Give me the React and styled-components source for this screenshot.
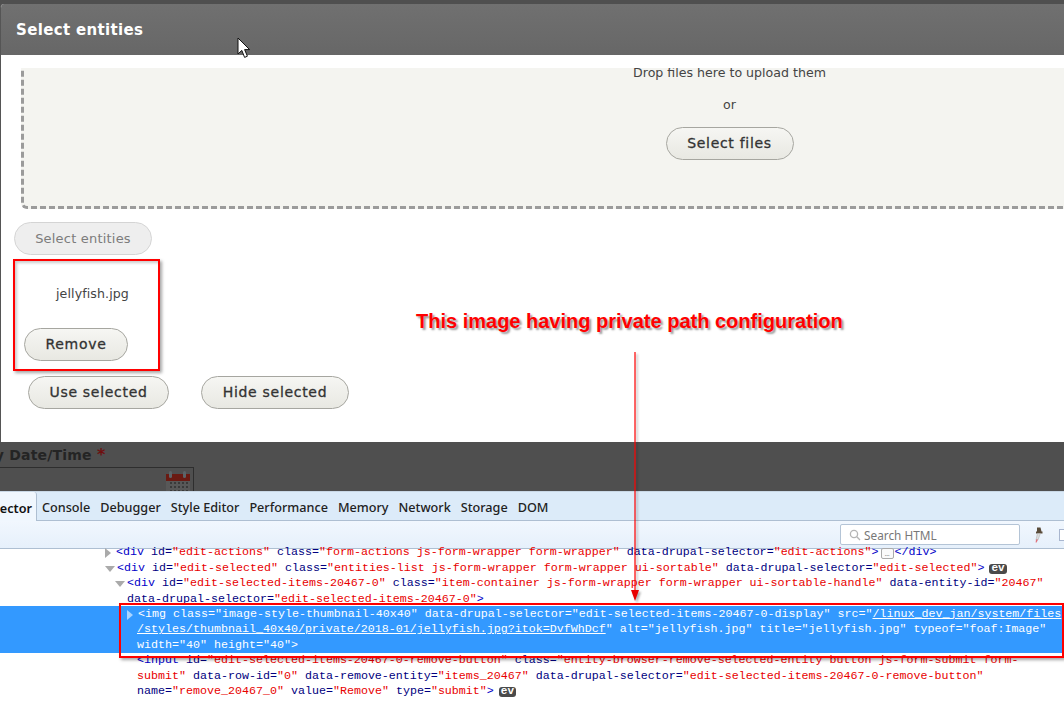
import styled, { createGlobalStyle } from "styled-components";

const GlobalStyle = createGlobalStyle`
    html, body {
        margin: 0;
        padding: 0;
        background: #4f4f4f;
    }
    * {
        box-sizing: border-box;
    }
`;

const tabs = [
    "Console",
    "Debugger",
    "Style Editor",
    "Performance",
    "Memory",
    "Network",
    "Storage",
    "DOM",
];

function Attr({ name, value }) {
    return (
        <>
            <AttrName>{name}=</AttrName>
            <AttrValue>"{value}"</AttrValue>
        </>
    );
}

export default function App() {
    return (
        <Page>
            <GlobalStyle />
            <Dialog>
                <TitleBar>Select entities</TitleBar>
                <DialogBody>
                    <DropClip>
                        <DropZone>
                            <DropText>Drop files here to upload them</DropText>
                            <DropOr>or</DropOr>
                            <Button $w={128}>Select files</Button>
                        </DropZone>
                    </DropClip>
                    <SelectRow>
                        <Button $w={138} $disabled>
                            Select entities
                        </Button>
                    </SelectRow>
                    <SelectedItem>
                        <FileName>jellyfish.jpg</FileName>
                        <Button $w={104}>Remove</Button>
                    </SelectedItem>
                    <Actions>
                        <Button $w={141}>Use selected</Button>
                        <Button $w={148}>Hide selected</Button>
                    </Actions>
                </DialogBody>
            </Dialog>

            <Backdrop>
                <FieldLabel>
                    Display Date/Time <Required>*</Required>
                </FieldLabel>
                <DateField>
                    <CalendarIcon />
                </DateField>
            </Backdrop>

            <DevTools>
                <TabBar>
                    <ActiveTab>ector</ActiveTab>
                    {tabs.map((tab) => (
                        <Tab key={tab}>{tab}</Tab>
                    ))}
                </TabBar>
                <ToolBar>
                    <SearchBox>
                        <svg width="12" height="12" viewBox="0 0 12 12" fill="none" stroke="#b5b5b5" strokeWidth="1.3">
                            <circle cx="5" cy="5" r="3.6" />
                            <path d="M7.8 7.8 11 11" />
                        </svg>
                        Search HTML
                    </SearchBox>
                    <EyeDropper width="10" height="16" viewBox="0 0 10 16">
                        <path d="M4 0.5H7.5L8.5 4.5H9.5V6.5H3V4.5H4Z" fill="#5a4c3a" />
                        <path d="M4.4 6.5H7.4L5 13H3Z" fill="#dcdcdc" stroke="#aaa" strokeWidth="0.5" />
                        <path d="M3 12.5H5L3.6 15.5H2.6Z" fill="#e0707a" />
                    </EyeDropper>
                    <PanelToggle />
                </ToolBar>
                <Markup>
                    <Row $indent={105}>
                        <Twisty $closed />
                        <Tag>&lt;div </Tag>
                        <Attr name="id" value="edit-actions" />{" "}
                        <Attr name="class" value="form-actions js-form-wrapper form-wrapper" />{" "}
                        <Attr name="data-drupal-selector" value="edit-actions" />
                        <Tag>&gt;</Tag>
                        <Dots>…</Dots>
                        <Tag>&lt;/div&gt;</Tag>
                    </Row>
                    <Row $indent={105}>
                        <Twisty />
                        <Tag>&lt;div </Tag>
                        <Attr name="id" value="edit-selected" />{" "}
                        <Attr name="class" value="entities-list js-form-wrapper form-wrapper ui-sortable" />{" "}
                        <Attr name="data-drupal-selector" value="edit-selected" />
                        <Tag>&gt;</Tag>
                        <EvBadge>ev</EvBadge>
                    </Row>
                    <Row $indent={115}>
                        <Twisty />
                        <Tag>&lt;div </Tag>
                        <Attr name="id" value="edit-selected-items-20467-0" />{" "}
                        <Attr name="class" value="item-container js-form-wrapper form-wrapper ui-sortable-handle" />{" "}
                        <Attr name="data-entity-id" value="20467" />
                    </Row>
                    <Row $indent={127}>
                        <Attr name="data-drupal-selector" value="edit-selected-items-20467-0" />
                        <Tag>&gt;</Tag>
                    </Row>
                    <SelectedBlock>
                        <Row $indent={127}>
                            <Twisty $closed $light />
                            {'<img class="image-style-thumbnail-40x40" data-drupal-selector="edit-selected-items-20467-0-display" src="'}
                            <u>/linux_dev_jan/system/files</u>
                        </Row>
                        <Row $indent={137}>
                            <u>/styles/thumbnail_40x40/private/2018-01/jellyfish.jpg?itok=DvfWhDcf</u>
                            {'" alt="jellyfish.jpg" title="jellyfish.jpg" typeof="foaf:Image"'}
                        </Row>
                        <Row $indent={137}>{'width="40" height="40">'}</Row>
                    </SelectedBlock>
                    <Row $indent={137}>
                        <Tag>&lt;input </Tag>
                        <Attr name="id" value="edit-selected-items-20467-0-remove-button" />{" "}
                        <AttrName>class=</AttrName>
                        <AttrValue>"entity-browser-remove-selected-entity button js-form-submit form-</AttrValue>
                    </Row>
                    <Row $indent={137}>
                        <AttrValue>submit"</AttrValue>{" "}
                        <Attr name="data-row-id" value="0" />{" "}
                        <Attr name="data-remove-entity" value="items_20467" />{" "}
                        <Attr name="data-drupal-selector" value="edit-selected-items-20467-0-remove-button" />
                    </Row>
                    <Row $indent={137}>
                        <Attr name="name" value="remove_20467_0" />{" "}
                        <Attr name="value" value="Remove" />{" "}
                        <Attr name="type" value="submit" />
                        <Tag>&gt;</Tag>
                        <EvBadge>ev</EvBadge>
                    </Row>
                </Markup>
            </DevTools>

            {/* screenshot annotations drawn on top */}
            <RemoveHighlight />
            <ImgHighlight />
            <Note>This image having private path configuration</Note>
            <NoteArrow width="14" height="250" viewBox="0 0 14 250">
                <path d="M7 0V240" stroke="#f00" strokeWidth="1.2" />
                <path d="M3 238H11L7 249Z" fill="#e80000" />
            </NoteArrow>
            <Cursor width="14" height="22" viewBox="0 0 14 22">
                <path
                    d="M1 1V17L4.8 13.4 7.6 20.4 10.4 19.2 7.6 12.6H12.6Z"
                    fill="#fff"
                    stroke="#111"
                    strokeWidth="1"
                />
            </Cursor>
        </Page>
    );
}

function CalendarIcon() {
    const dots = [];
    for (let y = 0; y < 3; y++) {
        for (let x = 0; x < 5; x++) {
            dots.push(<rect key={`${x}-${y}`} x={4 + x * 4} y={11 + y * 4} width="2" height="2" fill="#3a3a3a" />);
        }
    }
    return (
        <CalendarSvg width="24" height="21" viewBox="0 0 24 21">
            <rect y="3" width="24" height="18" fill="#585858" />
            <rect y="3" width="24" height="7" fill="#6a1a12" />
            <rect x="3" y="0" width="3" height="7" rx="1.5" fill="#5c6468" />
            <rect x="17" y="0" width="3" height="7" rx="1.5" fill="#5c6468" />
            {dots}
        </CalendarSvg>
    );
}

const Page = styled.div`
    position: relative;
    width: 1064px;
    height: 702px;
    overflow: hidden;
    display: flex;
    flex-direction: column;
    padding-top: 4px;
    background: #4f4f4f;
    font-family: "DejaVu Sans", sans-serif;
`;

const Dialog = styled.div`
    height: 438px;
    display: flex;
    flex-direction: column;
    background: #fff;
    border-left: 1px solid #555;
    border-top-left-radius: 4px;
    overflow: hidden;
    flex-shrink: 0;
`;

const TitleBar = styled.div`
    height: 51px;
    padding-left: 15px;
    display: flex;
    align-items: center;
    background: linear-gradient(#707070, #676767);
    color: #fff;
    font-size: 15px;
    font-weight: 700;
    letter-spacing: 0.35px;
`;

const DialogBody = styled.div`
    flex: 1;
    padding-top: 13px;
`;

const DropClip = styled.div`
    height: 141px;
    overflow: hidden;
`;

const DropZone = styled.div`
    width: 1414px;
    height: 151px;
    margin: -10px 0 0 20px;
    padding-top: 6px;
    display: flex;
    flex-direction: column;
    align-items: center;
    background: #f4f4f0;
    border: 3px dashed #9b9b9b;
    border-top: 0;
    border-right: 0;
    border-bottom-left-radius: 6px;
`;

const DropText = styled.div`
    color: #444;
    font-size: 12.6px;
    line-height: 18px;
`;

const DropOr = styled.div`
    margin: 14px 0 13px;
    color: #444;
    font-size: 12.6px;
    line-height: 18px;
`;

const Button = styled.div`
    width: ${(p) => p.$w}px;
    height: 33px;
    flex-shrink: 0;
    display: flex;
    align-items: center;
    justify-content: center;
    padding-bottom: ${(p) => (p.$disabled ? 0 : 2)}px;
    border: 1px solid ${(p) => (p.$disabled ? "#d4d4d4" : "#a6a6a0")};
    border-radius: 17px;
    background: ${(p) => (p.$disabled ? "#eeeeee" : "linear-gradient(#f6f6f3, #e8e8e2)")};
    color: ${(p) => (p.$disabled ? "#7c7c7c" : "#333")};
    font-size: ${(p) => (p.$disabled ? 13 : 14)}px;
    letter-spacing: ${(p) => (p.$disabled ? 0.2 : 0.7)}px;
    -webkit-text-stroke: ${(p) => (p.$disabled ? "0" : "0.3px #333")};
`;

const SelectRow = styled.div`
    margin: 13px 0 0 13px;
`;

const SelectedItem = styled.div`
    height: 106px;
    margin: 0 0 0 23px;
    display: flex;
    flex-direction: column;
    justify-content: flex-end;
`;

const FileName = styled.div`
    margin: 0 0 25px 32px;
    color: #444;
    font-size: 12.6px;
    line-height: 18px;
    letter-spacing: 0.1px;
`;

const Actions = styled.div`
    margin: 15px 0 0 27px;
    display: flex;
    gap: 32px;
`;

const Backdrop = styled.div`
    height: 49px;
    flex-shrink: 0;
    overflow: hidden;
    background: #4f4f4f;
`;

const FieldLabel = styled.div`
    margin: 4px 0 0 -55px;
    height: 18px;
    white-space: nowrap;
    color: #242424;
    font-size: 14px;
    font-weight: 700;
    letter-spacing: 0.2px;
    line-height: 18px;
`;

const Required = styled.span`
    color: #6e0f0f;
    font-size: 16px;
`;

const DateField = styled.div`
    width: 195px;
    height: 40px;
    margin: 3px 0 0 -1px;
    padding: 3px 3px 0 0;
    display: flex;
    justify-content: flex-end;
    border: 1px solid #2e2e2e;
`;

const CalendarSvg = styled.svg`
    flex-shrink: 0;
`;

const DevTools = styled.div`
    flex: 1;
    display: flex;
    flex-direction: column;
    background: #fff;
    overflow: hidden;
`;

const TabBar = styled.div`
    height: 30px;
    flex-shrink: 0;
    display: flex;
    align-items: stretch;
    gap: 10px;
    background: #dcebf9;
    border-top: 1px solid #c9d8e6;
    border-bottom: 1px solid #aebfd2;
    font-family: "Noto Sans", sans-serif;
    font-size: 12.65px;
    font-weight: 500;
    color: #222;
`;

const Tab = styled.div`
    display: flex;
    align-items: center;
    padding-top: 2px;
`;

const ActiveTab = styled.div`
    width: 37px;
    height: 30px;
    margin-right: -5px;
    display: flex;
    align-items: center;
    justify-content: flex-end;
    padding: 2px 4px 0 0;
    background: #f0f7fe;
    border-right: 1px solid #aebfd2;
    border-top-right-radius: 3px;
    color: #111;
    font-weight: 600;
`;

const ToolBar = styled.div`
    height: 28px;
    flex-shrink: 0;
    display: flex;
    align-items: center;
    padding-left: 840px;
    background: linear-gradient(#f1f7fe, #e6f0fb);
    border-bottom: 1px solid #aebfd2;
`;

const SearchBox = styled.div`
    width: 180px;
    height: 21px;
    flex-shrink: 0;
    display: flex;
    align-items: center;
    gap: 3px;
    padding-left: 8px;
    background: #fff;
    border: 1px solid #b4c4d6;
    border-radius: 2px;
    color: #777;
    font-family: "Noto Sans", sans-serif;
    font-size: 11.8px;
`;

const EyeDropper = styled.svg`
    margin-left: 13px;
    flex-shrink: 0;
`;

const PanelToggle = styled.div`
    width: 12px;
    height: 12px;
    margin-left: 16px;
    flex-shrink: 0;
    background: #fff;
    border: 1px solid #a9b6cf;
`;

const Markup = styled.div`
    flex: 1;
    margin-top: -4px;
    font-family: "Liberation Mono", monospace;
    font-size: 11.67px;
    line-height: 15.5px;
    color: #000080;
`;

const Row = styled.div`
    height: 15.5px;
    padding-left: ${(p) => p.$indent}px;
    white-space: pre;
`;

const Twisty = styled.span`
    display: inline-block;
    vertical-align: top;
    width: ${(p) => (p.$closed ? 11 : 12)}px;
    height: 15.5px;
    &::before {
        content: "";
        display: block;
        margin-top: 3px;
        width: 0;
        height: 0;
        ${(p) =>
            p.$closed
                ? `border-left: 6px solid ${p.$light ? "#a9d4ff" : "#aaa"};
                   border-top: 5px solid transparent;
                   border-bottom: 5px solid transparent;`
                : `border-top: 6px solid #aaa;
                   border-left: 5px solid transparent;
                   border-right: 5px solid transparent;
                   margin-top: 5px;`}
    }
`;

const Tag = styled.span`
    color: #0000c8;
`;

const AttrName = styled.span`
    color: #000080;
`;

const AttrValue = styled.span`
    color: #e80000;
`;

const Dots = styled.span`
    display: inline-flex;
    vertical-align: top;
    width: 13px;
    height: 11px;
    margin: 3px 1px 0 2px;
    align-items: center;
    justify-content: center;
    border: 1px solid #aaa;
    border-radius: 2px;
    background: #fafafa;
    color: #555;
    font-size: 8px;
`;

const EvBadge = styled.span`
    display: inline-flex;
    vertical-align: top;
    height: 10px;
    margin: 3px 0 0 5px;
    padding: 0 2px;
    align-items: center;
    border-radius: 3px;
    background: #4a4a4a;
    color: #fff;
    font-size: 11px;
    font-weight: 700;
`;

const SelectedBlock = styled.div`
    margin-top: -1.5px;
    padding-top: 1px;
    background: #3399ff;
    color: #fff;
`;

const RemoveHighlight = styled.div`
    position: absolute;
    left: 13px;
    top: 259px;
    width: 147px;
    height: 112px;
    border: 2.5px solid #f00;
    box-shadow: 2px 2px 3px rgba(0, 0, 0, 0.35), inset 2px 2px 3px rgba(0, 0, 0, 0.2);
`;

const ImgHighlight = styled.div`
    position: absolute;
    left: 119px;
    top: 603px;
    width: 945px;
    height: 55px;
    border: 2.5px solid #f00;
    box-shadow: 2px 2px 3px rgba(0, 0, 0, 0.35);
`;

const Note = styled.div`
    position: absolute;
    left: 416px;
    top: 310px;
    white-space: nowrap;
    color: #f00;
    font-family: "Liberation Sans", sans-serif;
    font-size: 20px;
    font-weight: 700;
    line-height: 22px;
    text-shadow: 2px 2px 2px rgba(0, 0, 0, 0.4);
`;

const NoteArrow = styled.svg`
    position: absolute;
    left: 628px;
    top: 352px;
    filter: drop-shadow(2px 2px 1px rgba(0, 0, 0, 0.3));
`;

const Cursor = styled.svg`
    position: absolute;
    left: 237px;
    top: 37px;
`;
